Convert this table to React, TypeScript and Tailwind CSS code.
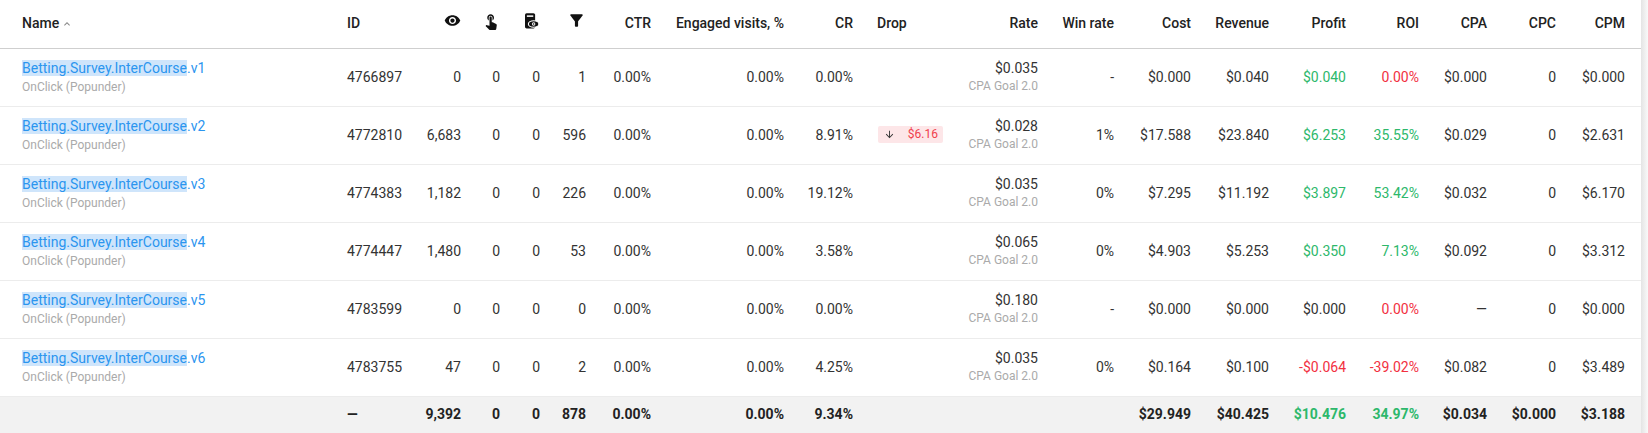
import React from "react";

type C = "g" | "r" | "n";
type Row = {
  v: string;
  id: string;
  imp: string;
  clk: string;
  doc: string;
  conv: string;
  ctr: string;
  eng: string;
  cr: string;
  drop?: string;
  rate: string;
  win: string;
  cost: string;
  rev: string;
  profit: string;
  profitC: C;
  roi: string;
  roiC: C;
  cpa: string;
  cpc: string;
  cpm: string;
};

const rows: Row[] = [
  { v: "v1", id: "4766897", imp: "0", clk: "0", doc: "0", conv: "1", ctr: "0.00%", eng: "0.00%", cr: "0.00%", rate: "$0.035", win: "-", cost: "$0.000", rev: "$0.040", profit: "$0.040", profitC: "g", roi: "0.00%", roiC: "r", cpa: "$0.000", cpc: "0", cpm: "$0.000" },
  { v: "v2", id: "4772810", imp: "6,683", clk: "0", doc: "0", conv: "596", ctr: "0.00%", eng: "0.00%", cr: "8.91%", drop: "$6.16", rate: "$0.028", win: "1%", cost: "$17.588", rev: "$23.840", profit: "$6.253", profitC: "g", roi: "35.55%", roiC: "g", cpa: "$0.029", cpc: "0", cpm: "$2.631" },
  { v: "v3", id: "4774383", imp: "1,182", clk: "0", doc: "0", conv: "226", ctr: "0.00%", eng: "0.00%", cr: "19.12%", rate: "$0.035", win: "0%", cost: "$7.295", rev: "$11.192", profit: "$3.897", profitC: "g", roi: "53.42%", roiC: "g", cpa: "$0.032", cpc: "0", cpm: "$6.170" },
  { v: "v4", id: "4774447", imp: "1,480", clk: "0", doc: "0", conv: "53", ctr: "0.00%", eng: "0.00%", cr: "3.58%", rate: "$0.065", win: "0%", cost: "$4.903", rev: "$5.253", profit: "$0.350", profitC: "g", roi: "7.13%", roiC: "g", cpa: "$0.092", cpc: "0", cpm: "$3.312" },
  { v: "v5", id: "4783599", imp: "0", clk: "0", doc: "0", conv: "0", ctr: "0.00%", eng: "0.00%", cr: "0.00%", rate: "$0.180", win: "-", cost: "$0.000", rev: "$0.000", profit: "$0.000", profitC: "n", roi: "0.00%", roiC: "r", cpa: "—", cpc: "0", cpm: "$0.000" },
  { v: "v6", id: "4783755", imp: "47", clk: "0", doc: "0", conv: "2", ctr: "0.00%", eng: "0.00%", cr: "4.25%", rate: "$0.035", win: "0%", cost: "$0.164", rev: "$0.100", profit: "-$0.064", profitC: "r", roi: "-39.02%", roiC: "r", cpa: "$0.082", cpc: "0", cpm: "$3.489" },
];

const colorCls = (c: C) =>
  c === "g" ? "text-[#2db86b]" : c === "r" ? "text-[#f2303f]" : "text-[#333333]";

const widths = [347, 73, 41, 39, 40, 46, 65, 133, 69, 107, 78, 76, 77, 78, 77, 73, 68, 69, 69, 16];

function EyeIcon() {
  return (
    <svg width="17" height="17" viewBox="0 0 24 24" className="inline-block">
      <path
        fill="#111"
        d="M12 4.5C7 4.5 2.73 7.61 1 12c1.73 4.39 6 7.5 11 7.5s9.27-3.11 11-7.5c-1.73-4.39-6-7.5-11-7.5zM12 17c-2.76 0-5-2.24-5-5s2.24-5 5-5 5 2.24 5 5-2.24 5-5 5zm0-8c-1.66 0-3 1.34-3 3s1.34 3 3 3 3-1.34 3-3-1.34-3-3-3z"
      />
    </svg>
  );
}

function TouchIcon() {
  return (
    <svg width="18" height="18" viewBox="0 0 24 24" className="inline-block">
      <path
        fill="#111"
        d="M9 11.24V7.5C9 6.12 10.12 5 11.5 5S14 6.12 14 7.5v3.74c1.21-.81 2-2.18 2-3.74C16 5.01 13.99 3 11.5 3S7 5.01 7 7.5c0 1.56.79 2.93 2 3.74zm9.84 4.63l-4.54-2.26c-.17-.07-.35-.11-.54-.11H13v-6c0-.83-.67-1.5-1.5-1.5S10 6.67 10 7.5v10.74l-3.43-.72c-.08-.01-.15-.03-.24-.03-.31 0-.59.13-.79.33l-.79.8 4.94 4.94c.27.27.65.44 1.06.44h6.79c.75 0 1.33-.55 1.44-1.28l.75-5.27c.01-.07.02-.14.02-.2 0-.62-.38-1.16-.91-1.38z"
      />
    </svg>
  );
}

function DocEyeIcon() {
  return (
    <svg width="18" height="18" viewBox="0 0 24 24" className="inline-block">
      <rect x="4" y="1.5" width="13.5" height="20.5" rx="2.2" fill="#111" />
      <rect x="6.5" y="4.5" width="8.5" height="2" fill="#fff" />
      <ellipse cx="15.5" cy="16" rx="7" ry="4.4" fill="#111" stroke="#fff" strokeWidth="1.5" />
      <circle cx="15.5" cy="16" r="2.3" fill="#fff" />
      <circle cx="15.5" cy="16" r="1.1" fill="#111" />
    </svg>
  );
}

function FilterIcon() {
  return (
    <svg width="19" height="19" viewBox="0 0 24 24" className="inline-block">
      <path
        fill="#111"
        d="M4.25 5.61C6.27 8.2 10 13 10 13v6c0 .55.45 1 1 1h2c.55 0 1-.45 1-1v-6s3.72-4.8 5.74-7.39c.51-.66.04-1.61-.79-1.61H5.04c-.83 0-1.3.95-.79 1.61z"
      />
    </svg>
  );
}

function ChevronUp() {
  return (
    <svg width="12" height="12" viewBox="0 0 24 24" className="inline-block ml-[2px] mb-[2px]">
      <path fill="#888" d="M7.41 15.41 12 10.83l4.59 4.58L18 14l-6-6-6 6z" />
    </svg>
  );
}

function ArrowDown() {
  return (
    <svg width="11" height="11" viewBox="0 0 24 24" className="inline-block">
      <path fill="#333" d="m20 12-1.41-1.41L13 16.17V4h-2v12.17l-5.58-5.59L4 12l8 8 8-8z" />
    </svg>
  );
}

export default function App() {
  const th = "font-medium text-[14px] text-[#222222] align-middle p-0 whitespace-nowrap";
  const td = "text-[14px] align-middle p-0 whitespace-nowrap";
  const dark = "text-[#333333]";
  const tf = "text-[14px] font-bold align-middle p-0 whitespace-nowrap";
  const fdark = "text-[#222222]";
  const green = "text-[#2db86b]";
  return (
    <div
      className="flex w-[1648px] h-[433px] bg-white overflow-hidden"
      style={{ fontFamily: "Roboto, 'Liberation Sans', sans-serif" }}
    >
      <div className="w-[1641px] shrink-0">
        <table className="table-fixed border-collapse w-[1641px]">
          <colgroup>
            {widths.map((w, i) => (
              <col key={i} style={{ width: w }} />
            ))}
          </colgroup>
          <thead>
            <tr className="h-[48px] border-b border-[#cfcfcf]">
              <th className={`${th} text-left pl-[22px]`}>
                Name
                <ChevronUp />
              </th>
              <th className={`${th} text-left`}>ID</th>
              <th className={`${th} text-right`}>
                <span className="inline-flex justify-end w-full"><EyeIcon /></span>
              </th>
              <th className={`${th} text-right`}>
                <span className="inline-flex justify-end w-full"><TouchIcon /></span>
              </th>
              <th className={`${th} text-right`}>
                <span className="inline-flex justify-end w-full"><DocEyeIcon /></span>
              </th>
              <th className={`${th} text-right`}>
                <span className="inline-flex justify-end w-full"><FilterIcon /></span>
              </th>
              <th className={`${th} text-right`}>CTR</th>
              <th className={`${th} text-right`}>Engaged visits, %</th>
              <th className={`${th} text-right`}>CR</th>
              <th className={`${th} text-left pl-[24px]`}>Drop</th>
              <th className={`${th} text-right`}>Rate</th>
              <th className={`${th} text-right`}>Win rate</th>
              <th className={`${th} text-right`}>Cost</th>
              <th className={`${th} text-right`}>Revenue</th>
              <th className={`${th} text-right`}>Profit</th>
              <th className={`${th} text-right`}>ROI</th>
              <th className={`${th} text-right`}>CPA</th>
              <th className={`${th} text-right`}>CPC</th>
              <th className={`${th} text-right`}>CPM</th>
              <th className={th}></th>
            </tr>
          </thead>
          <tbody>
            {rows.map((r) => (
              <tr key={r.v} className="h-[58px] border-b border-[#ececec]">
                <td className={`${td} text-left pl-[22px]`}>
                  <div className="flex flex-col">
                    <span className="text-[14px] leading-[20px] text-[#2b95ef]">
                      <span className="bg-[#cfe5fb]">Betting.Survey.InterCourse</span>.{r.v}
                    </span>
                    <span className="text-[12px] leading-[18px] text-[#aaaaaa]">OnClick (Popunder)</span>
                  </div>
                </td>
                <td className={`${td} ${dark} text-left`}>{r.id}</td>
                <td className={`${td} ${dark} text-right`}>{r.imp}</td>
                <td className={`${td} ${dark} text-right`}>{r.clk}</td>
                <td className={`${td} ${dark} text-right`}>{r.doc}</td>
                <td className={`${td} ${dark} text-right`}>{r.conv}</td>
                <td className={`${td} ${dark} text-right`}>{r.ctr}</td>
                <td className={`${td} ${dark} text-right`}>{r.eng}</td>
                <td className={`${td} ${dark} text-right`}>{r.cr}</td>
                <td className={`${td} text-left pl-[25px]`}>
                  {r.drop && (
                    <span className="inline-flex items-center justify-between w-[65px] h-[17px] pl-[6px] pr-[5px] rounded-[2px] bg-[#fde6e8] text-[12px] text-[#f0414d]">
                      <ArrowDown />
                      <span>{r.drop}</span>
                    </span>
                  )}
                </td>
                <td className={`${td} ${dark} text-right`}>
                  <div className="flex flex-col items-end">
                    <span className="leading-[18px]">{r.rate}</span>
                    <span className="text-[12px] leading-[18px] text-[#aaaaaa]">CPA Goal 2.0</span>
                  </div>
                </td>
                <td className={`${td} ${dark} text-right`}>{r.win}</td>
                <td className={`${td} ${dark} text-right`}>{r.cost}</td>
                <td className={`${td} ${dark} text-right`}>{r.rev}</td>
                <td className={`${td} text-right ${colorCls(r.profitC)}`}>{r.profit}</td>
                <td className={`${td} text-right ${colorCls(r.roiC)}`}>{r.roi}</td>
                <td className={`${td} ${dark} text-right`}>{r.cpa}</td>
                <td className={`${td} ${dark} text-right`}>{r.cpc}</td>
                <td className={`${td} ${dark} text-right`}>{r.cpm}</td>
                <td className={td}></td>
              </tr>
            ))}
            <tr className="h-[37px] bg-[#f2f2f2]">
              <td className={tf}></td>
              <td className={`${tf} ${fdark} text-left`}>—</td>
              <td className={`${tf} ${fdark} text-right`}>9,392</td>
              <td className={`${tf} ${fdark} text-right`}>0</td>
              <td className={`${tf} ${fdark} text-right`}>0</td>
              <td className={`${tf} ${fdark} text-right`}>878</td>
              <td className={`${tf} ${fdark} text-right`}>0.00%</td>
              <td className={`${tf} ${fdark} text-right`}>0.00%</td>
              <td className={`${tf} ${fdark} text-right`}>9.34%</td>
              <td className={tf}></td>
              <td className={tf}></td>
              <td className={tf}></td>
              <td className={`${tf} ${fdark} text-right`}>$29.949</td>
              <td className={`${tf} ${fdark} text-right`}>$40.425</td>
              <td className={`${tf} ${green} text-right`}>$10.476</td>
              <td className={`${tf} ${green} text-right`}>34.97%</td>
              <td className={`${tf} ${fdark} text-right`}>$0.034</td>
              <td className={`${tf} ${fdark} text-right`}>$0.000</td>
              <td className={`${tf} ${fdark} text-right`}>$3.188</td>
              <td className={tf}></td>
            </tr>
          </tbody>
        </table>
      </div>
      <div className="w-[7px] shrink-0 h-full bg-linear-to-r from-[#e4e4e4] to-[#f9f9f9]"></div>
    </div>
  );
}
